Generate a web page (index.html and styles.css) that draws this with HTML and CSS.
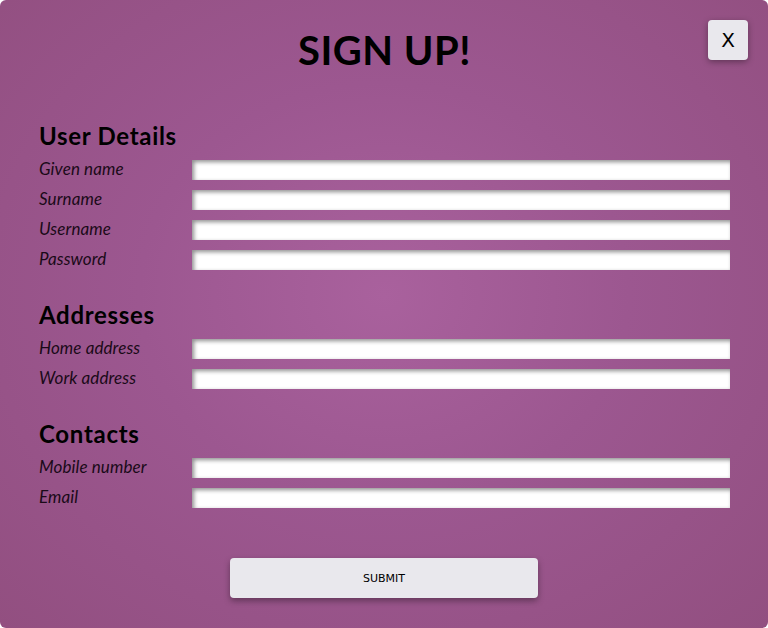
FILE: index.html
```html
<!DOCTYPE html>
<html lang="en">
<head>
<meta charset="utf-8">
<title>Sign up</title>
<link rel="stylesheet" href="styles.css">
</head>
<body>
<div class="page">
  <header class="header">
    <h1 class="title">SIGN UP!</h1>
    <button class="close" type="button">X</button>
  </header>
  <form class="form">
    <section class="section">
      <h2 class="section-title">User Details</h2>
      <div class="rows">
        <label class="label">Given name</label><input class="field" type="text">
        <label class="label">Surname</label><input class="field" type="text">
        <label class="label">Username</label><input class="field" type="text">
        <label class="label">Password</label><input class="field" type="password">
      </div>
    </section>
    <section class="section">
      <h2 class="section-title">Addresses</h2>
      <div class="rows">
        <label class="label">Home address</label><input class="field" type="text">
        <label class="label">Work address</label><input class="field" type="text">
      </div>
    </section>
    <section class="section">
      <h2 class="section-title">Contacts</h2>
      <div class="rows">
        <label class="label">Mobile number</label><input class="field" type="text">
        <label class="label">Email</label><input class="field" type="text">
      </div>
    </section>
    <div class="actions">
      <button class="submit" type="button">SUBMIT</button>
    </div>
  </form>
</div>
</body>
</html>
```

FILE: styles.css
```css
html, body {
  margin: 0;
  padding: 0;
  background: #ffffff;
}
.page {
  box-sizing: border-box;
  width: 768px;
  height: 628px;
  border-radius: 6px;
  background: radial-gradient(ellipse at 50% 47%, #a9619d 0%, #9c5790 45%, #924f80 100%);
  padding: 26px 38px 0 39px;
  font-family: "Lato", "Open Sans", sans-serif;
  color: #000;
  overflow: hidden;
}
.header {
  position: relative;
  height: 48px;
}
.title {
  margin: 0;
  text-align: center;
  font-size: 40px;
  line-height: 48px;
  font-weight: 700;
  letter-spacing: 0.5px;
}
.close {
  position: absolute;
  top: -6px;
  right: -18px;
  width: 40px;
  height: 40px;
  border: none;
  border-radius: 4px;
  background: #e9e8ed;
  box-shadow: 0 2px 6px rgba(0,0,0,0.35);
  font-family: "DejaVu Sans", sans-serif;
  font-size: 20px;
  color: #000;
  padding: 0;
}
.form {
  padding-top: 48px;
}
.section {
  margin-bottom: 31px;
}
.section-title {
  margin: 0 0 10px 0;
  font-size: 24px;
  line-height: 28px;
  font-weight: 700;
  letter-spacing: 0.7px;
}
.rows {
  display: grid;
  grid-template-columns: 153px 1fr;
  row-gap: 10px;
  align-items: center;
}
.label {
  font-style: italic;
  font-size: 17px;
  line-height: 18px;
  letter-spacing: 0.1px;
  color: #1a0a18;
  padding-bottom: 2px;
}
.field {
  box-sizing: border-box;
  height: 20px;
  width: 100%;
  border: none;
  margin: 0;
  background: #ffffff;
  box-shadow: inset 2px 2px 4px rgba(0,0,0,0.45);
}
.actions {
  display: flex;
  justify-content: center;
  padding-top: 19px;
  margin-left: -1px;
}
.submit {
  width: 308px;
  height: 40px;
  border: none;
  border-radius: 4px;
  background: #e9e8ed;
  box-shadow: 0 3px 6px rgba(0,0,0,0.35);
  font-family: "DejaVu Sans", sans-serif;
  font-size: 11px;
  color: #000;
  padding-top: 1px;
}
```
